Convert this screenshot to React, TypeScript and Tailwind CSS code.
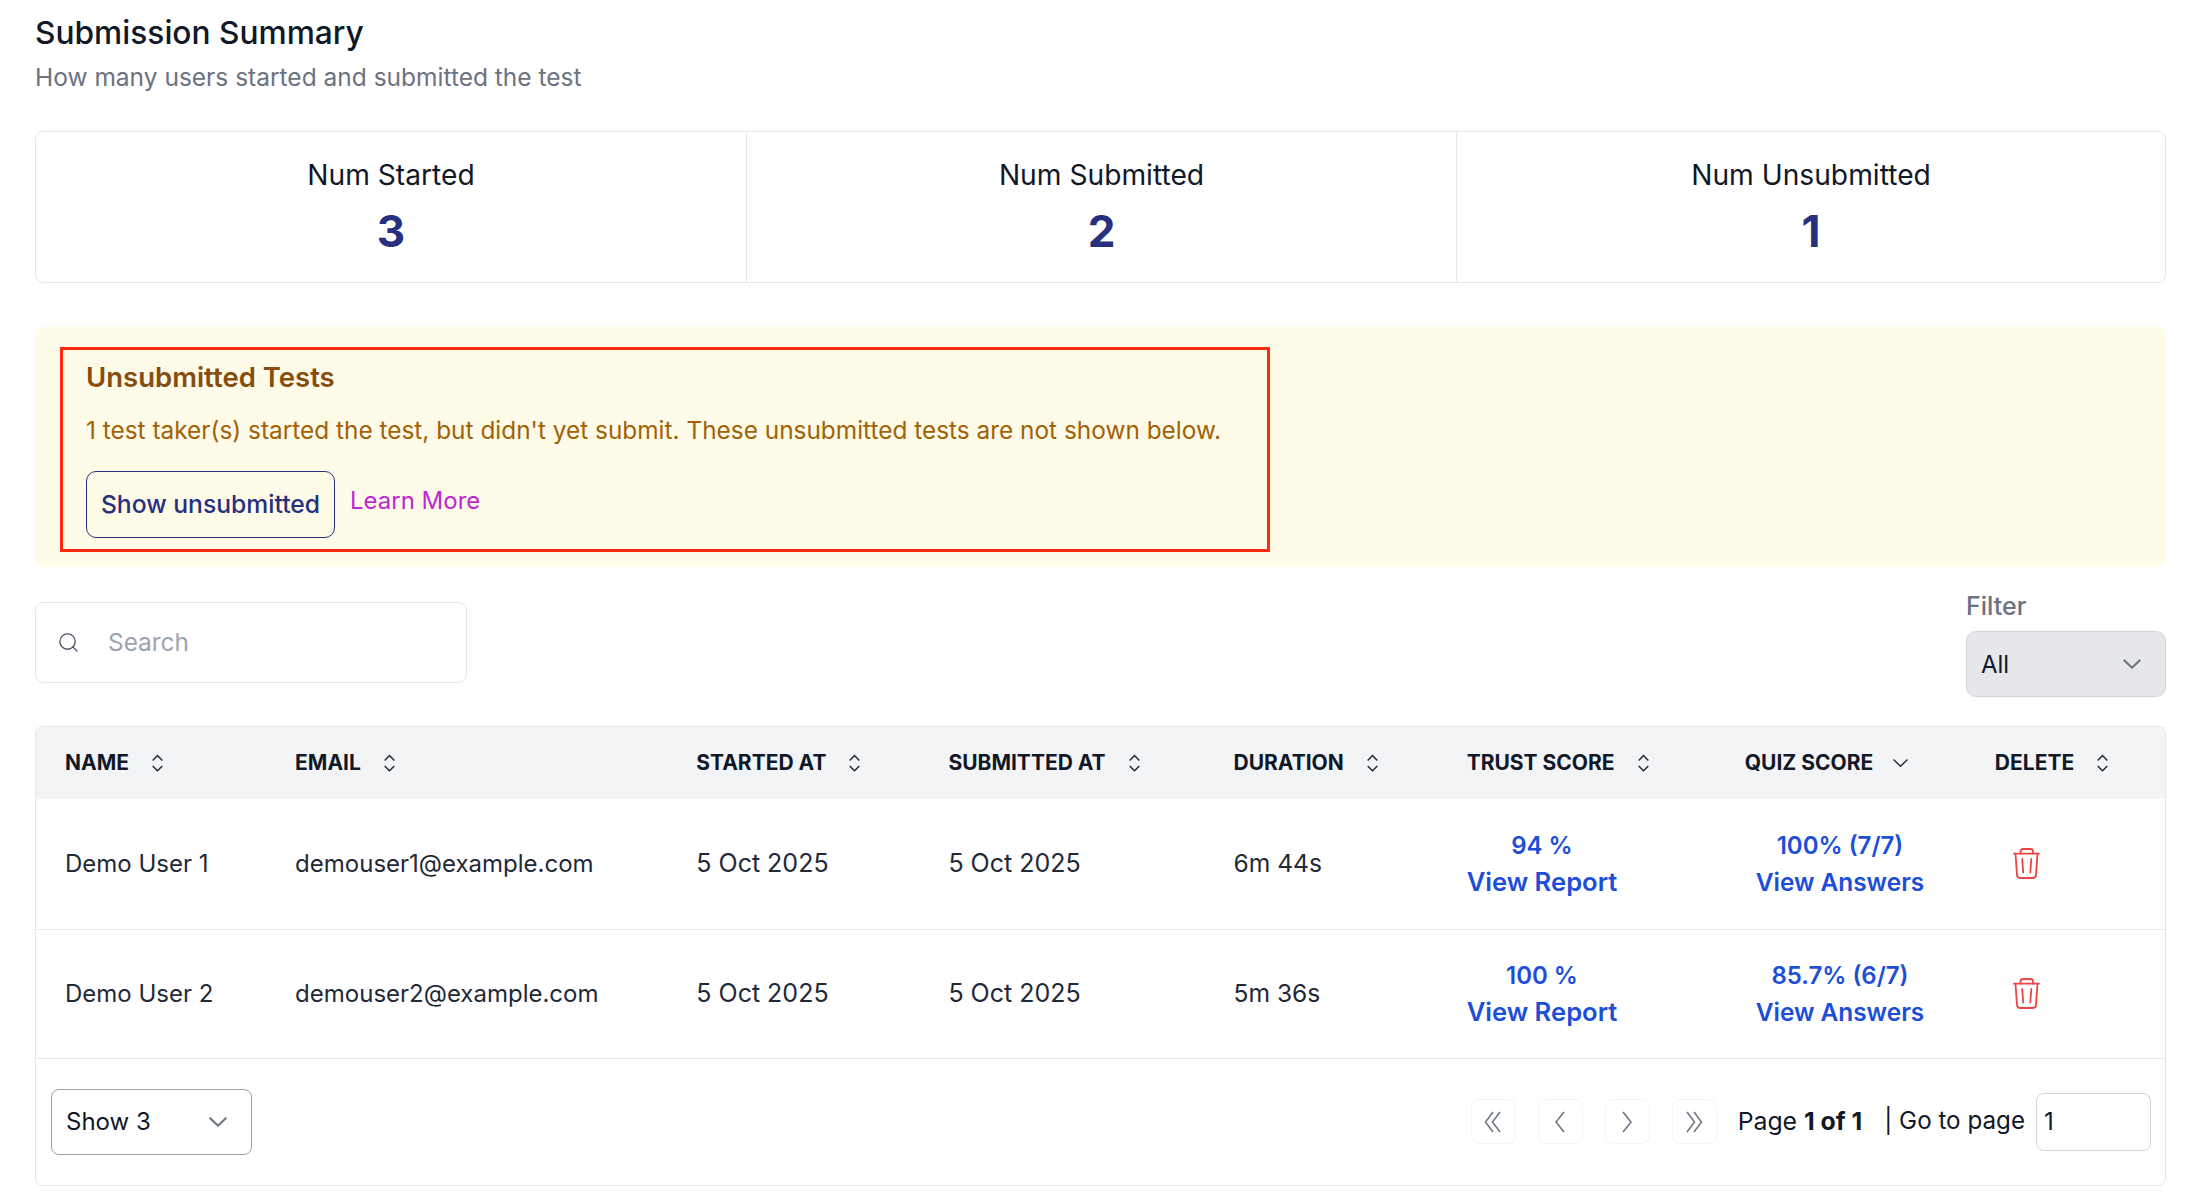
import { Search } from 'lucide-react';

const COLUMNS = [
  { label: 'NAME', width: 'w-[230px]' },
  { label: 'EMAIL', width: 'w-[401px]' },
  { label: 'STARTED AT', width: 'w-[252px]' },
  { label: 'SUBMITTED AT', width: 'w-[285px]' },
  { label: 'DURATION', width: 'w-[233px]' },
  { label: 'TRUST SCORE', width: 'w-[278px]' },
  { label: 'QUIZ SCORE', width: 'w-[250px]', sorted: true },
  { label: 'DELETE', width: 'w-[199px]' },
];

const ROWS = [
  { name: 'Demo User 1', email: 'demouser1@example.com', duration: '6m 44s', trust: '94 %', quiz: '100% (7/7)', height: 'h-[130px]' },
  { name: 'Demo User 2', email: 'demouser2@example.com', duration: '5m 36s', trust: '100 %', quiz: '85.7% (6/7)', height: 'h-[129px]' },
];

const STATS = [
  { label: 'Num Started', value: '3' },
  { label: 'Num Submitted', value: '2' },
  { label: 'Num Unsubmitted', value: '1' },
];

function SortIcon() {
  return (
    <svg viewBox="0 0 11 18" className="h-[18px] w-[11px] shrink-0 text-[#1f2937]" fill="none" stroke="currentColor" strokeWidth="1.5">
      <path d="M.7 6.500 5.500 1.500l4.800 5" />
      <path d="M.7 12 5.500 16.800 10.300 12" />
    </svg>
  );
}

function SortedIcon() {
  return (
    <svg viewBox="0 0 15 8" className="h-2 w-[15px] shrink-0 text-[#1f2937]" fill="none" stroke="currentColor" strokeWidth="1.4">
      <path d="M.5.500 7.500 7.300 14.500.500" />
    </svg>
  );
}

function SelectChevron() {
  return (
    <svg viewBox="0 0 18 10" className="h-[10px] w-[18px] text-[#6b7280]" fill="none" stroke="currentColor" strokeWidth="2">
      <path d="M.7.700 9 8.700 17.300.700" />
    </svg>
  );
}

function TrashIcon() {
  return (
    <svg viewBox="0 0 27 31" className="block h-[31px] w-[27px] text-[#ef4444]" fill="none" stroke="currentColor" strokeWidth="1.8" strokeLinecap="round" strokeLinejoin="round">
      <path d="M1 5.700h25" />
      <path d="M7.500 5.700V3.500C7.500 2 8.500 1 10 1h7.500C19 1 20 2 20 3.500v2.200" />
      <path d="M2.500 5.700 4 27c.1 1.800 1.200 3 3 3h13c1.800 0 2.900-1.200 3-3l1.500-21.300" />
      <path d="M9.200 11 10.200 24.500" />
      <path d="M18.300 11 17.300 24.500" />
    </svg>
  );
}

function PageButton({ path }: { path: string }) {
  return (
    <button className="flex h-[45px] w-[45px] items-center justify-center rounded-lg border border-[#f3f4f6] bg-white text-[#6b7280]">
      <svg viewBox="0 0 18 22" className="h-[22px] w-[18px]" fill="none" stroke="currentColor" strokeWidth="1.5">
        <path d={path} />
      </svg>
    </button>
  );
}

export default function App() {
  return (
    <div className="min-h-[1200px] bg-white pl-[35px] pr-[34px] pt-4 font-['Inter',sans-serif] text-[#111827]">
      <h2 className="text-[31.700px] font-medium leading-[34px]">Submission Summary</h2>
      <p className="mt-[12px] text-[24.5px] leading-[30px] text-[#6b7280]">How many users started and submitted the test</p>

      <div className="mt-[39px] grid h-[152px] grid-cols-[711px_710px_1fr] divide-x divide-[#e5e7eb] rounded-lg border border-[#e5e7eb]">
        {STATS.map((stat) => (
          <div key={stat.label} className="flex flex-col items-center pt-[24px]">
            <span className="text-[28.2px] leading-[38px]">{stat.label}</span>
            <span className="mt-[13px] text-[44px] font-bold leading-[48px] text-[#27307f]">{stat.value}</span>
          </div>
        ))}
      </div>

      <div className="mt-[44px] h-[240px] rounded-lg bg-[#fefbe8] pl-[25px] pt-[20px]">
        <div className="h-[205px] w-[1210px] border-[3px] border-[#ff2a12] pl-[23px] pt-[9px]">
          <h3 className="text-[27.5px] font-semibold leading-[36px] text-[#854d0e]">Unsubmitted Tests</h3>
          <p className="mt-[18px] text-[24.4px] leading-[34px] text-[#a16207]">
            1 test taker(s) started the test, but didn't yet submit. These unsubmitted tests are not shown below.
          </p>
          <div className="mt-[24px] flex items-start gap-[15px]">
            <button className="h-[67px] w-[249px] rounded-[10px] border border-[#27307f] text-[24.7px] font-medium text-[#27307f]">Show unsubmitted</button>
            <a className="mt-[15px] text-[24px] leading-[30px] text-[#c026d3]">Learn More</a>
          </div>
        </div>
      </div>

      <div className="mt-[21px] flex items-center justify-between">
        <div className="flex h-[81px] w-[432px] items-center rounded-lg border border-[#e5e7eb] pl-[21px]">
          <Search className="h-[23px] w-[23px] text-[#4b5563]" strokeWidth={1.4} />
          <span className="ml-[28px] text-[24.400px] text-[#9ca3af]">Search</span>
        </div>
        <div className="w-[200px]">
          <div className="text-[25px] font-medium leading-[36px] text-[#6b7280]">Filter</div>
          <div className="mt-[7px] flex h-[66px] items-center justify-between rounded-[10px] border border-[#d1d5db] bg-[#e5e7eb] pl-[14px] pr-[24px]">
            <span className="pt-px text-[24px]">All</span>
            <SelectChevron />
          </div>
        </div>
      </div>

      <div className="mt-[29px] h-[460px] rounded-lg border border-[#e5e7eb]">
        <table className="w-full table-fixed border-collapse">
          <thead>
            <tr className="h-[72px] bg-[#f3f4f6]">
              {COLUMNS.map((col) => (
                <th key={col.label} className={`${col.width} pl-[29px] text-left text-[21px] font-bold`}>
                  <span className={col.sorted ? 'flex items-center gap-5' : 'flex items-center gap-[23px]'}>
                    {col.label}
                    {col.sorted ? <SortedIcon /> : <SortIcon />}
                  </span>
                </th>
              ))}
            </tr>
          </thead>
          <tbody>
            {ROWS.map((row) => (
              <tr key={row.name} className={`${row.height} border-b border-[#e5e7eb] text-[24px] text-[#1f2937]`}>
                <td className="pl-[29px]">{row.name}</td>
                <td className="pl-[29px]">{row.email}</td>
                <td className="pl-[29px] text-[25px]">5 Oct 2025</td>
                <td className="pl-[29px] text-[25px]">5 Oct 2025</td>
                <td className="pl-[29px] text-[24.600px]">{row.duration}</td>
                <td className="pl-[29px]">
                  <div className="inline-flex flex-col items-center font-semibold leading-[36px] text-[#1d4ed8]">
                    <span>{row.trust}</span>
                    <span className="text-[25.6px]">View Report</span>
                  </div>
                </td>
                <td className="pl-[29px]">
                  <div className="ml-[11px] inline-flex flex-col items-center font-semibold leading-[36px] text-[#1d4ed8]">
                    <span>{row.quiz}</span>
                    <span className="text-[24.4px]">View Answers</span>
                  </div>
                </td>
                <td className="pl-[47px]">
                  <TrashIcon />
                </td>
              </tr>
            ))}
          </tbody>
        </table>
        <div className="flex items-center justify-between pl-[15px] pr-[14px] pt-[30px]">
          <div className="flex h-[66px] w-[201px] items-center justify-between rounded-lg border border-[#9ca3af] pl-[14px] pr-6 text-[24px] text-[#111827]">
            Show 3
            <SelectChevron />
          </div>
          <div className="flex items-center text-[24px]">
            <div className="flex gap-[22px]">
              <PageButton path="M9 1 1.500 11 9 21M16 1 8.500 11 16 21" />
              <PageButton path="M13 1 5 11l8 10" />
              <PageButton path="M5 1l8 10-8 10" />
              <PageButton path="M2 1l7.500 10L2 21M9 1l7.500 10L9 21" />
            </div>
            <span className="ml-[21px] text-[24.8px]">Page <b>1 of 1</b></span>
            <span className="ml-[22px] text-[24.2px]">| Go to page</span>
            <div className="ml-[11px] flex h-[58px] w-[115px] items-center rounded-lg border border-[#d1d5db] pl-[7px]">1</div>
          </div>
        </div>
      </div>
    </div>
  );
}
